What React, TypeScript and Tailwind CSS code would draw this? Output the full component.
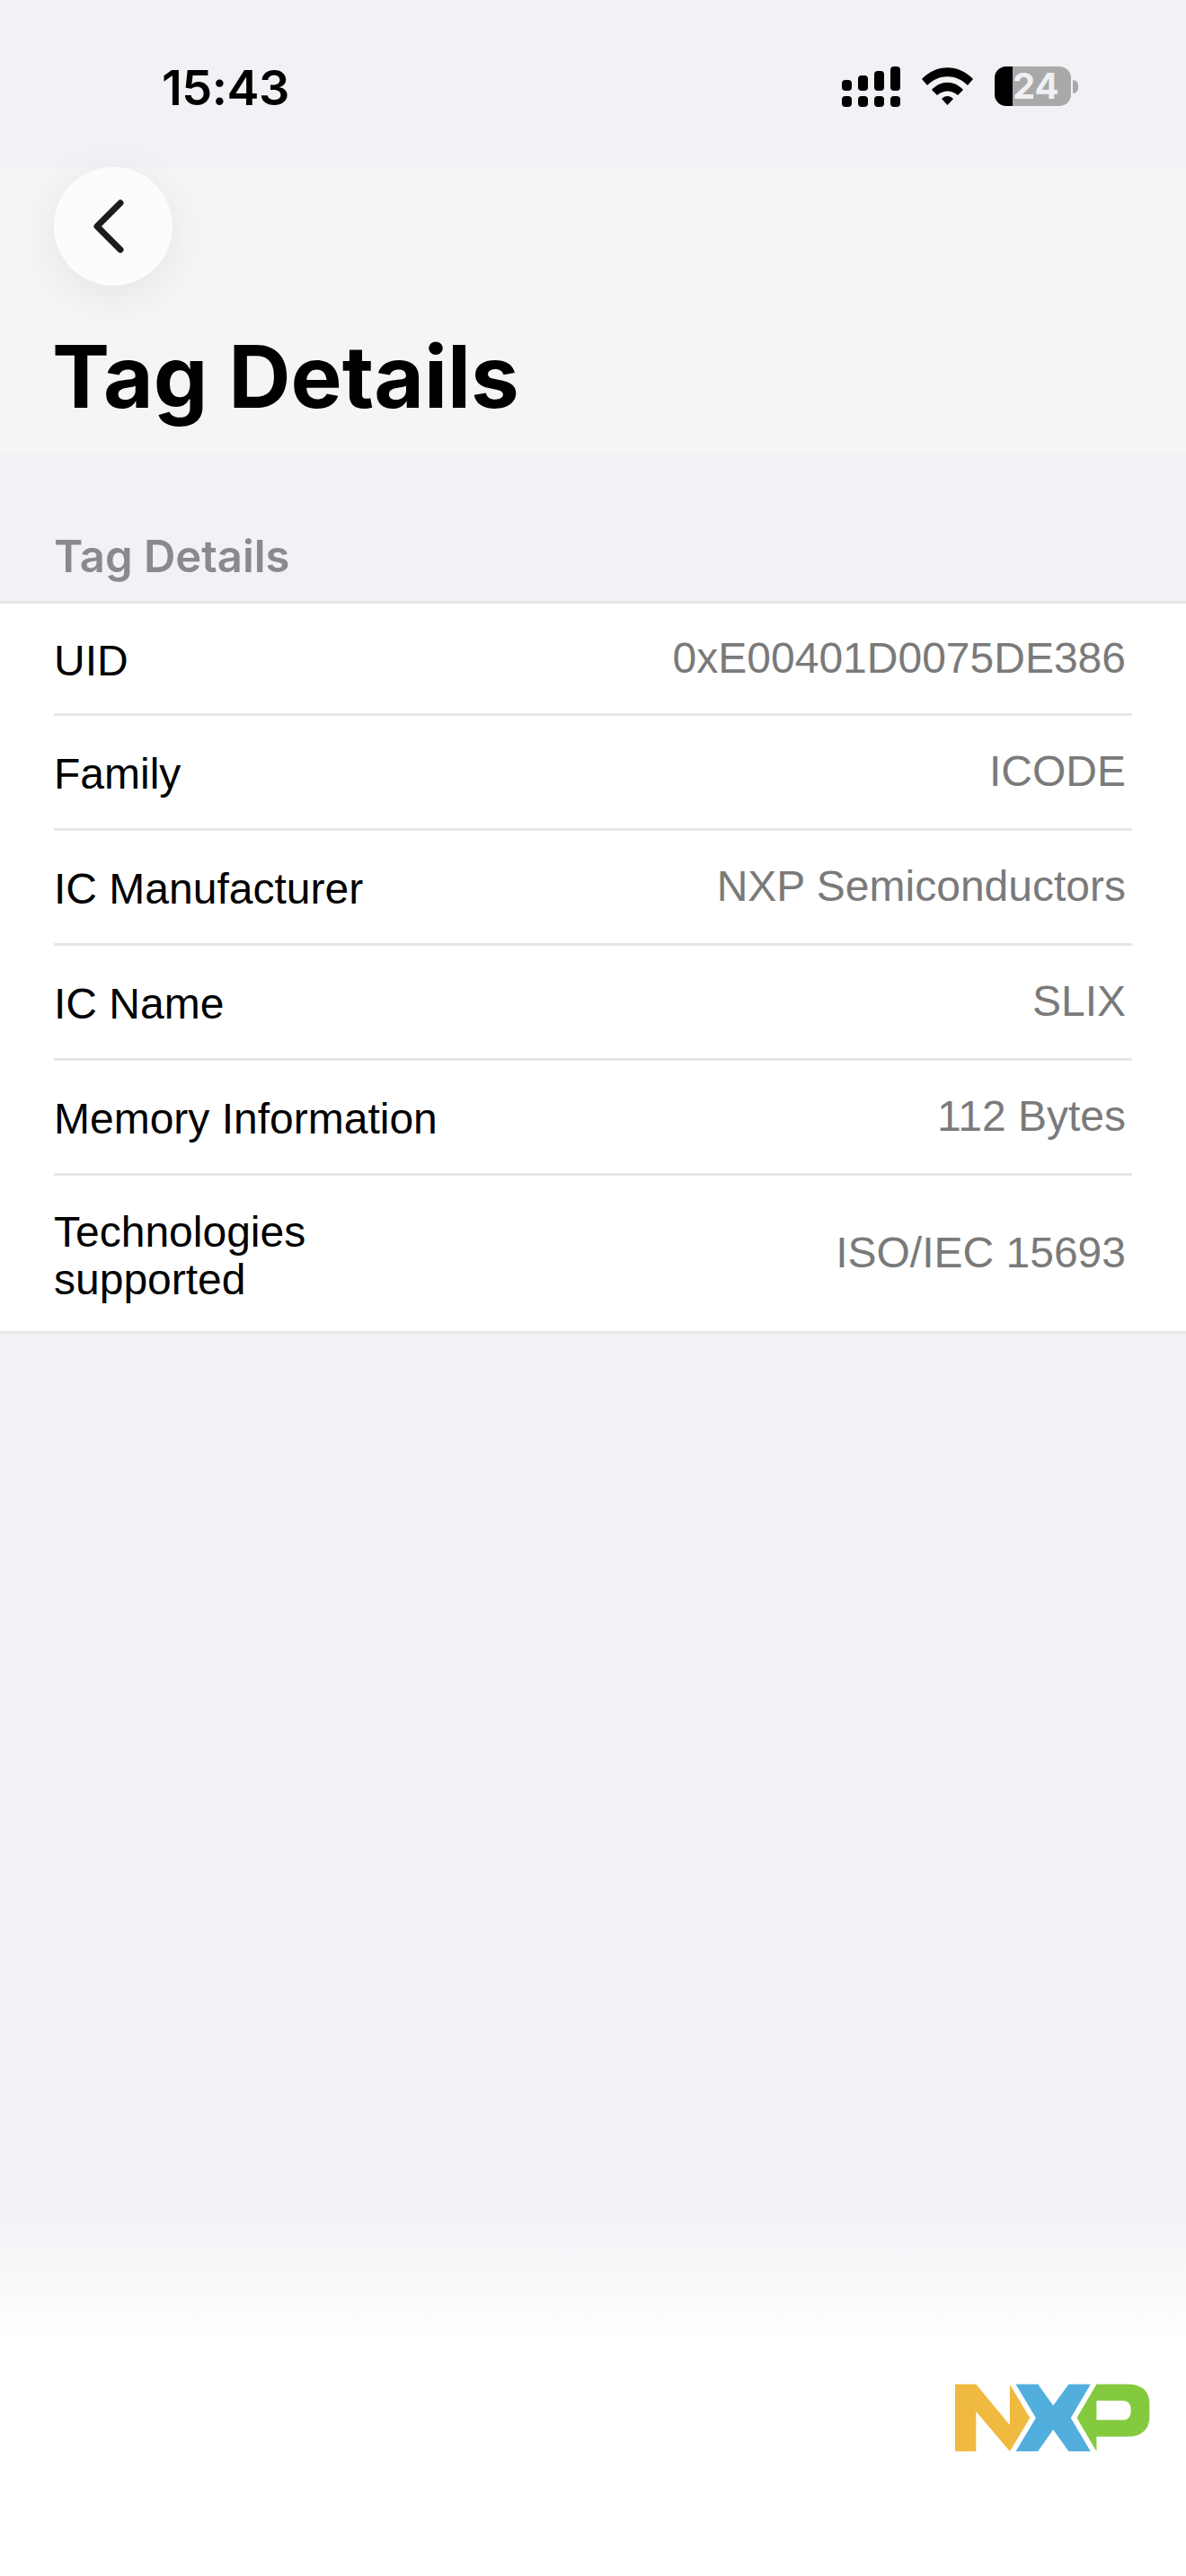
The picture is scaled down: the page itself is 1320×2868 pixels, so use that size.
const rows: { label: string; value: string; tall?: boolean }[] = [
  { label: "UID", value: "0xE00401D0075DE386" },
  { label: "Family", value: "ICODE" },
  { label: "IC Manufacturer", value: "NXP Semiconductors" },
  { label: "IC Name", value: "SLIX" },
  { label: "Memory Information", value: "112 Bytes" },
  { label: "Technologies supported", value: "ISO/IEC 15693", tall: true },
];

function Signal() {
  return (
    <svg width="66" height="46" viewBox="0 0 66 46" fill="#000">
      <rect x="0" y="15" width="11" height="12" rx="4" />
      <rect x="18" y="10" width="11" height="17" rx="4" />
      <rect x="36" y="5" width="11" height="22" rx="4" />
      <rect x="54" y="0" width="11" height="27" rx="4" />
      <rect x="0" y="33" width="11" height="12" rx="4" />
      <rect x="18" y="33" width="11" height="12" rx="4" />
      <rect x="36" y="33" width="11" height="12" rx="4" />
      <rect x="54" y="33" width="11" height="12" rx="4" />
    </svg>
  );
}

function Wifi() {
  return (
    <svg width="58" height="42" viewBox="0 0 58 42" fill="#000">
      <path d="M0 13 C16 -4 41 -4 57 13 L51 20 C38 7 19 7 6 20 Z" />
      <path d="M11 25 C21 14 36 14 46 25 L40 31 C33 25 24 25 17 31 Z" />
      <path d="M22 35 C26 31 31 31 35 35 L28.500 42 Z" />
    </svg>
  );
}

function Battery() {
  return (
    <div className="flex items-center gap-[2px]">
      <div className="flex h-[44px] w-[85px] rounded-[13px] bg-[#a9a9a9]">
        <div className="h-full w-[20px] rounded-l-[13px] bg-black" />
        <span className="text-[40px] leading-[44px] font-bold text-[#f0f0f4] font-['Inter',sans-serif]">24</span>
      </div>
      <div className="h-[15px] w-[6px] rounded-r-full bg-[#a9a9a9]" />
    </div>
  );
}

function NxpLogo() {
  return (
    <svg width="217" height="78" viewBox="95 98 652 230">
      <path fill="#F0B93F" d="M95 100H165L278 237V100L345 213L278 325L165 191V325H95Z" />
      <path fill="#52AEDD" d="M298 100H372L423 172L475 100H548L482 213L548 325H475L423 252L372 325H298L365 213Z" />
      <path
        fill="#84CA3F"
        fillRule="evenodd"
        d="M502 213L568 100H675C720 100 745 125 745 165V210C745 250 720 275 675 275H568V325ZM568 155V220H655C675 220 683 208 683 188C683 167 675 155 655 155Z"
      />
    </svg>
  );
}

export default function App() {
  return (
    <div className="flex h-[2868px] w-[1320px] flex-col overflow-hidden bg-[#f1f1f6] font-['Liberation_Sans',sans-serif]">
      <div className="flex h-[186px] items-start justify-between pt-[70px] pr-[120px] pl-[180px]">
        <span className="text-[54px] leading-[56px] font-semibold tracking-[-0.5px] text-black font-['Inter',sans-serif]">15:43</span>
        <div className="mt-[4px] flex items-start gap-[23px]">
          <Signal />
          <div className="mt-px">
            <Wifi />
          </div>
          <Battery />
        </div>
      </div>

      <header className="h-[319px] bg-[#f5f5f6] px-[60px]">
        <button className="flex h-[132px] w-[132px] items-center justify-center rounded-full bg-[#fcfcfc] pr-[10px] shadow-[0_10px_50px_rgba(0,0,0,0.07)]">
          <svg width="36" height="60" viewBox="0 0 36 60" fill="none" stroke="#1c1c1e" strokeWidth="7" strokeLinecap="round" strokeLinejoin="round">
            <path d="M31 4 L5 30 L31 56" />
          </svg>
        </button>
        <h1 className="mt-[43px] -ml-[2px] text-[96px] leading-[116px] font-bold text-black font-['Inter',sans-serif]">Tag Details</h1>
      </header>

      <h2 className="mt-[85px] h-[79px] px-[60px] text-[49px] leading-[60px] font-semibold text-[#8a8a8e] font-['Inter',sans-serif]">Tag Details</h2>

      <section className="border-y-[3px] border-[#e6e6e8] bg-white px-[60px]">
        {rows.map((r, i) => (
          <div
            key={r.label}
            className={`flex items-center justify-between pr-[7px] ${r.tall ? "h-[173px]" : "h-[125px]"} ${i < rows.length - 1 ? "border-b-[3px] border-[#e6e6e8]" : ""} ${i > 0 && !r.tall ? "h-[128px]" : ""}`}
          >
            <span className={`mt-[4px] text-[48px] leading-[53px] text-black ${r.tall ? "w-[320px]" : ""}`}>{r.label}</span>
            <span className="mb-[2px] text-[48px] leading-[53px] text-[#7a7a7a]">{r.value}</span>
          </div>
        ))}
      </section>

      <div className="flex-1" />

      <footer className="flex h-[428px] items-start justify-end bg-gradient-to-b from-[#f1f1f6] to-white to-[40%] pt-[213px] pr-[40px]">
        <NxpLogo />
      </footer>
    </div>
  );
}
